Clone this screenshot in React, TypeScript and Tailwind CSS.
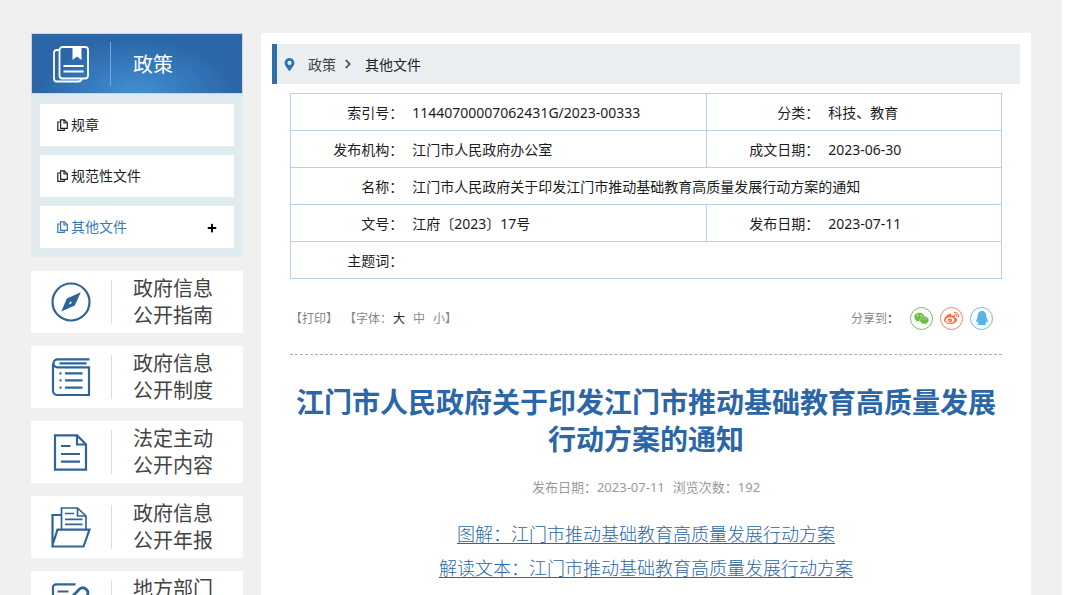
import React from 'react';
import { ChevronRight } from 'lucide-react';
import { FaWeixin, FaWeibo, FaQq, FaPlus, FaMapMarkerAlt } from 'react-icons/fa';

const menu = [
  { label: '规章' },
  { label: '规范性文件' },
  { label: '其他文件', active: true },
];

const CompassIcon = () => (
  <>
    <circle cx="20" cy="20" r="18.5" />
    <path
      d="M29.8 10.2 23.8 23.5 10.3 29.5 15.8 16.5Z M19.6 19.200 17.700 22.400 21 21Z"
      fill="currentColor"
      fillRule="evenodd"
      stroke="none"
    />
  </>
);

const BookIcon = () => (
  <>
    <path d="M38.5 2.3H6.5a4 4 0 0 0 0 8H38V38H6.5A4.5 4.5 0 0 1 2 33.5V6.5" />
    <path d="M8.5 6.3H35.5M14 16.3H31.5M14 23.3H31.5M14 30.7H31.5" />
    <path d="M8.5 16.3H10.5M8.5 23.3H10.5M8.5 30.7H10.5" />
  </>
);

const DocIcon = () => (
  <>
    <path d="M4 3.3H26L35 12.5V37.7H4Z" />
    <path d="M26 3.3V12.5H35" />
    <path d="M10 14H19.5M10 22H29M10 29.7H29" />
  </>
);

const FolderIcon = () => (
  <>
    <path d="M10.5 22V1H26.5L35 9V22" strokeWidth="1.7" />
    <path d="M26.5 1V9H35" strokeWidth="1.7" />
    <path d="M14 6.5H23M14 12.3H31.5M14 17.3H31.5" strokeWidth="1.7" />
    <path d="M10.5 8H1.5V39.5H32.5L38.5 22.7H6.5L1.5 38" />
  </>
);

const EditIcon = () => (
  <>
    <path d="M24.5 2.3H5A3 3 0 0 0 2 5.3V35a3 3 0 0 0 3 3H30a3 3 0 0 0 3-3V26" />
    <path d="M6.5 9.5H17.5M6.5 16.5H14" />
    <path d="M17 25 18.5 17.5 28.500 7a5.2 5.2 0 0 1 7.5 7L25 24Z" strokeWidth="2.8" />
  </>
);

const cards = [
  { lines: ['政府信息', '公开指南'], icon: <CompassIcon /> },
  { lines: ['政府信息', '公开制度'], icon: <BookIcon /> },
  { lines: ['法定主动', '公开内容'], icon: <DocIcon /> },
  { lines: ['政府信息', '公开年报'], icon: <FolderIcon /> },
  { lines: ['地方部门'], icon: <EditIcon /> },
];

const shares = [
  { label: '微信', icon: <FaWeixin size={15} />, color: 'border-[#7ac356] text-[#6cbf45]' },
  { label: '微博', icon: <FaWeibo size={15} />, color: 'border-[#ff8158] text-[#ff6a3c]' },
  { label: 'QQ', icon: <FaQq size={14} />, color: 'border-[#6cbbe8] text-[#55b4ea]' },
];

const FilesIcon = () => (
  <svg viewBox="0 0 11 12" className="h-3 w-[11px]" fill="none" stroke="currentColor" strokeWidth="1.2" aria-hidden="true">
    <path d="M3.6 9.4V.8H7.3L10.3 3.8V9.4Z" />
    <path d="M7 .8V4H10.3" />
    <path d="M3 3H.8V11.3H7.3V10" />
  </svg>
);

const Sidebar = () => (
  <aside className="w-[212px] shrink-0">
    <div className="bg-[#e0ebef]">
      <h2 className="flex h-[61px] items-center border border-[#c3d7e8] bg-[radial-gradient(ellipse_at_50%_100%,#428fd3_0%,#2b67a8_65%)] text-white">
        <svg viewBox="0 0 36 36" className="ml-[21px] size-9 overflow-visible" fill="none" stroke="currentColor" strokeWidth="1.8" aria-hidden="true">
          <rect x="6.5" y="1" width="28.5" height="31.5" rx="3" />
          <path d="M6.5 4H4A3 3 0 0 0 1 7V32.5a3 3 0 0 0 3 3H25.5a3 3 0 0 0 3-3" />
          <path d="M10.5 20H30.5M10.5 25.5H30.5" />
          <path d="M19.5 1H28.5V14L24 10.5 19.5 14Z" fill="currentColor" stroke="none" />
        </svg>
        <span className="ml-[21px] h-11 w-px bg-[#7da7d3]" />
        <span className="ml-[22px] pt-[2px] text-[20px] font-normal">政策</span>
      </h2>
      <ul className="flex flex-col gap-[9px] px-[9px] pt-[10px] pb-[9px] text-[14px]">
        {menu.map(item => (
          <li key={item.label} className="flex h-[42px] items-center justify-between bg-white px-[17px]">
            <a href="#" className={`flex items-center gap-[3px] leading-5 ${item.active ? 'text-[#377ab2]' : 'text-[#222]'}`}>
              <FilesIcon />
              {item.label}
            </a>
            {item.active && (
              <button type="button" aria-label="展开" className="pt-[2px] text-black">
                <FaPlus size={10} />
              </button>
            )}
          </li>
        ))}
      </ul>
    </div>
    <nav className="mt-[14px] flex flex-col gap-[13px]">
      {cards.map((card, idx) => (
        <a key={idx} href="#" className="flex h-[62px] items-start bg-white text-[#444]">
          <svg
            viewBox="0 0 40 40"
            className="mt-[11px] ml-5 size-10 overflow-visible text-[#2f6499]"
            fill="none"
            stroke="currentColor"
            strokeWidth="2.2"
            aria-hidden="true"
          >
            {card.icon}
          </svg>
          <span className="mt-[9px] ml-5 h-11 w-px bg-[#ddd]" />
          <span className="ml-[21px] flex flex-col pt-1 text-[20px] leading-[27px]">
            {card.lines.map(line => (
              <span key={line}>{line}</span>
            ))}
          </span>
        </a>
      ))}
    </nav>
  </aside>
);

const Label = ({ children, divided }: { children: React.ReactNode; divided?: boolean }) => (
  <th scope="row" className={`p-0 pr-px text-right font-normal ${divided ? 'border-l border-[#b8d1e8]' : ''}`}>
    {children}：
  </th>
);

const InfoTable = () => (
  <table className="w-full table-fixed border-collapse border border-[#b8d1e8] text-[14px] text-[#1c1c1c] [&_td]:pl-2 [&_tr]:h-[37px] [&_tr]:border-b [&_tr]:border-[#b8d1e8]">
    <colgroup>
      <col className="w-[16%]" />
      <col className="w-[42.5%]" />
      <col className="w-[16%]" />
      <col />
    </colgroup>
    <tbody>
      <tr>
        <Label>索引号</Label>
        <td>11440700007062431G/2023-00333</td>
        <Label divided>分类</Label>
        <td>科技、教育</td>
      </tr>
      <tr>
        <Label>发布机构</Label>
        <td>江门市人民政府办公室</td>
        <Label divided>成文日期</Label>
        <td>2023-06-30</td>
      </tr>
      <tr>
        <Label>名称</Label>
        <td colSpan={3}>江门市人民政府关于印发江门市推动基础教育高质量发展行动方案的通知</td>
      </tr>
      <tr>
        <Label>文号</Label>
        <td>江府〔2023〕17号</td>
        <Label divided>发布日期</Label>
        <td>2023-07-11</td>
      </tr>
      <tr>
        <Label>主题词</Label>
        <td colSpan={3} />
      </tr>
    </tbody>
  </table>
);

const App = () => {
  return (
    <div className="min-h-screen bg-white pr-[18px] font-['Noto_Sans','Noto_Sans_CJK_SC',sans-serif]">
      <div className="flex min-h-screen gap-[18px] bg-[#f0f0f0] px-[31px] pt-[33px]">
        <Sidebar />
        <main className="min-w-0 flex-1 bg-white px-[11px] pt-[11px]">
          <nav className="flex h-10 items-center border-l-[5px] border-[#2f6fa7] bg-[#ebeff2] pl-[6px] text-[14px]">
            <FaMapMarkerAlt size={13} className="text-[#2f74b0]" />
            <a href="#" className="ml-3 text-[#444]">政策</a>
            <ChevronRight size={14} strokeWidth={3} className="ml-[5px] text-[#444]" />
            <a href="#" className="ml-[10px] text-[#222]">其他文件</a>
          </nav>

          <div className="px-[18px] pt-[9px]">
            <InfoTable />

            <div className="flex h-[76px] items-center justify-between border-b border-dashed border-[#aaa] pt-[3px] text-[12px] text-[#888]">
              <div className="flex items-center pt-[2px]">
                <button type="button">【打印】</button>
                <span className="ml-[6px]">【字体：</span>
                <button type="button" className="ml-px text-[#222]">大</button>
                <button type="button" className="ml-2">中</button>
                <button type="button" className="ml-2">小</button>
                <span>】</span>
              </div>
              <div className="flex items-center gap-[7px] pr-[9px]">
                <span className="mr-1 pt-[2px]">
                  分享到<span className="text-[#222]">：</span>
                </span>
                {shares.map(s => (
                  <button
                    key={s.label}
                    type="button"
                    aria-label={s.label}
                    className={`flex size-[23px] items-center justify-center rounded-full border ${s.color}`}
                  >
                    {s.icon}
                  </button>
                ))}
              </div>
            </div>

            <h1 className="mt-[29px] text-center text-[28px] leading-[37px] font-bold text-[#2b66a6]">
              江门市人民政府关于印发江门市推动基础教育高质量发展行动方案的通知
            </h1>
            <p className="mt-5 flex justify-center gap-2 text-[13px] leading-[18px] text-[#999]">
              <span>发布日期：2023-07-11</span>
              <span>浏览次数：192</span>
            </p>
            <div className="mt-5 flex flex-col items-center font-['KaiTi','Noto_Sans_CJK_SC',sans-serif] text-[18px] leading-[34px] font-light text-[#2b66a6] underline underline-offset-2">
              <a href="#">图解：江门市推动基础教育高质量发展行动方案</a>
              <a href="#">解读文本：江门市推动基础教育高质量发展行动方案</a>
            </div>
          </div>
        </main>
      </div>
    </div>
  );
};

export default App;
